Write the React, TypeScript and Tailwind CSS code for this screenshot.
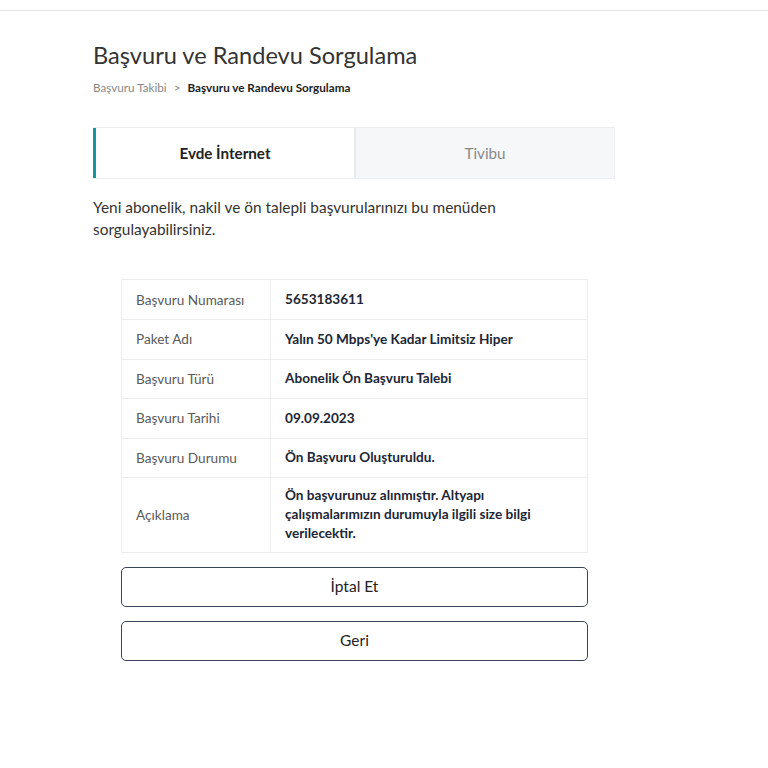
const rows = [
  { label: 'Başvuru Numarası', value: '5653183611' },
  { label: 'Paket Adı', value: "Yalın 50 Mbps'ye Kadar Limitsiz Hiper" },
  { label: 'Başvuru Türü', value: 'Abonelik Ön Başvuru Talebi' },
  { label: 'Başvuru Tarihi', value: '09.09.2023' },
  { label: 'Başvuru Durumu', value: 'Ön Başvuru Oluşturuldu.' },
  {
    label: 'Açıklama',
    value: 'Ön başvurunuz alınmıştır. Altyapı çalışmalarımızın durumuyla ilgili size bilgi verilecektir.',
  },
]

export default function App() {
  return (
    <div className="min-h-[768px] bg-white font-['Lato','Noto_Sans',sans-serif] text-[#333]">
      <div className="h-[11px] border-b border-[#e2e2e2]" />

      <div className="pl-[93px] pt-[30px]">
        <h1 className="text-[23.6px] leading-[28px] text-[#333]">Başvuru ve Randevu Sorgulama</h1>
        <div className="mt-[11px] flex items-center gap-[7px] text-[11.7px] leading-[14px]">
          <span className="text-[#888]">Başvuru Takibi</span>
          <span className="text-[#888]">&gt;</span>
          <span className="font-bold text-[#222]">Başvuru ve Randevu Sorgulama</span>
        </div>

        <div className="mt-[33px] flex w-[522px] h-[52px] border-y border-[#eceef1]">
          <div className="flex w-[261px] items-center justify-center border-l-[3px] border-[#13979c] bg-white text-[15.2px] font-bold text-[#222]">
            Evde İnternet
          </div>
          <div className="w-[2px] bg-[#e6eaf0]" />
          <div className="flex flex-1 items-center justify-center border-r border-[#eceef1] bg-[#f5f7f9] text-[15.2px] text-[#888]">
            Tivibu
          </div>
        </div>

        <p className="mt-[17px] w-[430px] text-[15.4px] leading-[22px] text-[#333]">
          Yeni abonelik, nakil ve ön talepli başvurularınızı bu menüden sorgulayabilirsiniz.
        </p>
      </div>

      <div className="ml-[121px] mt-[39px] w-[467px]">
        <div className="border border-[#ececec]">
          {rows.map((r, i) => (
            <div
              key={i}
              className={`flex text-[13.6px] ${i > 0 ? 'border-t border-[#ececec]' : ''} ${
                i === rows.length - 1 ? 'min-h-[75px]' : 'h-[39.4px]'
              }`}
            >
              <div className="flex w-[149px] items-center border-r border-[#ececec] pl-[14px] text-[#5a5a5a]">
                {r.label}
              </div>
              <div className="flex flex-1 items-center pl-[14px] pr-[40px] font-bold leading-[19px] text-[#1c2636]">
                {r.value}
              </div>
            </div>
          ))}
        </div>

        <button className="mt-[14px] flex h-[40px] w-full items-center justify-center rounded-[5px] border border-[#3b4456] text-[15.5px] text-[#222]">
          İptal Et
        </button>
        <button className="mt-[14px] flex h-[40px] w-full items-center justify-center rounded-[5px] border border-[#3b4456] text-[15.5px] text-[#222]">
          Geri
        </button>
      </div>
    </div>
  )
}
